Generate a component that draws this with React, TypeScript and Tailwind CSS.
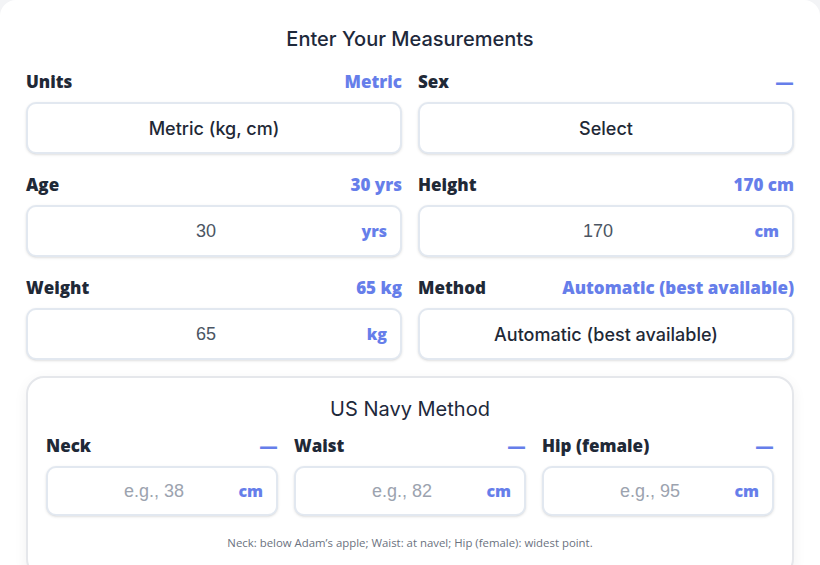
import React from "react";

const labelFont = { fontFamily: '"Open Sans", "Noto Sans", sans-serif' };

function Label({ name, value }: { name: string; value?: string }) {
  return (
    <div className="flex h-[20px] items-center justify-between mb-[10px]">
      <span className="text-[17px] font-extrabold text-[#1f2937] leading-[20px]" style={labelFont}>
        {name}
      </span>
      {value ? (
        <span className="text-[17px] font-extrabold text-[#667eea] leading-[20px]" style={labelFont}>
          {value}
        </span>
      ) : (
        <span className="text-[19px] font-bold text-[#667eea] leading-[20px] font-['DejaVu_Sans',sans-serif]">—</span>
      )}
    </div>
  );
}

function SelectBox({ text }: { text: string }) {
  return (
    <div className="flex h-[52px] items-center justify-center rounded-[10px] border-2 border-[#e2e8f0] bg-white shadow-sm">
      <span className="text-[18px] font-medium text-[#1f2937] font-['Inter',sans-serif]">{text}</span>
    </div>
  );
}

function InputBox({ value, placeholder, unit, h = "h-[52px]" }: { value?: string; placeholder?: string; unit: string; h?: string }) {
  return (
    <div className={`relative flex ${h} items-center rounded-[10px] border-2 border-[#e2e8f0] bg-white shadow-sm`}>
      <div className="flex-1 pl-[14px] pr-[30px] text-center text-[18px] font-['Liberation_Sans',Arial,sans-serif]">
        {value ? (
          <span className="text-[#4b5563]">{value}</span>
        ) : (
          <span className="text-[#9ca3af]">{placeholder}</span>
        )}
      </div>
      <span
        className="absolute right-[13px] top-1/2 -translate-y-1/2 text-[16px] font-extrabold text-[#667eea]"
        style={labelFont}
      >
        {unit}
      </span>
    </div>
  );
}

export default function App() {
  return (
    <div className="w-[820px] h-[565px] overflow-hidden bg-[#f3f4f6]">
      <div className="h-full rounded-t-2xl bg-white px-[26px] pt-[25px]">
        <h2 className="text-center text-[20px] leading-[28px] font-medium text-[#1e293b] mb-[19px] font-['Inter',sans-serif]">
          Enter Your Measurements
        </h2>
        <div className="grid grid-cols-2 gap-x-4 gap-y-[21px]">
          <div>
            <Label name="Units" value="Metric" />
            <SelectBox text="Metric (kg, cm)" />
          </div>
          <div>
            <Label name="Sex" />
            <SelectBox text="Select" />
          </div>
          <div>
            <Label name="Age" value="30 yrs" />
            <InputBox value="30" unit="yrs" />
          </div>
          <div>
            <Label name="Height" value="170 cm" />
            <InputBox value="170" unit="cm" />
          </div>
          <div>
            <Label name="Weight" value="65 kg" />
            <InputBox value="65" unit="kg" />
          </div>
          <div>
            <Label name="Method" value="Automatic (best available)" />
            <SelectBox text="Automatic (best available)" />
          </div>
        </div>
        <div className="mt-4 rounded-[18px] border-2 border-[#e5e7eb] bg-white px-[18px] pt-[17px] pb-6 shadow-[0_4px_14px_rgba(0,0,0,0.06)]">
          <h3 className="text-center text-[20px] leading-[28px] font-normal text-[#1e293b] mb-[13px] font-['Inter',sans-serif]">
            US Navy Method
          </h3>
          <div className="grid grid-cols-3 gap-4">
            <div>
              <Label name="Neck" />
              <InputBox placeholder="e.g., 38" unit="cm" h="h-[50px]" />
            </div>
            <div>
              <Label name="Waist" />
              <InputBox placeholder="e.g., 82" unit="cm" h="h-[50px]" />
            </div>
            <div>
              <Label name="Hip (female)" />
              <InputBox placeholder="e.g., 95" unit="cm" h="h-[50px]" />
            </div>
          </div>
          <p className="mt-[19px] text-center text-[11.4px] leading-[16px] text-[#6b7280]" style={labelFont}>
            Neck: below Adam’s apple; Waist: at navel; Hip (female): widest point.
          </p>
        </div>
      </div>
    </div>
  );
}
